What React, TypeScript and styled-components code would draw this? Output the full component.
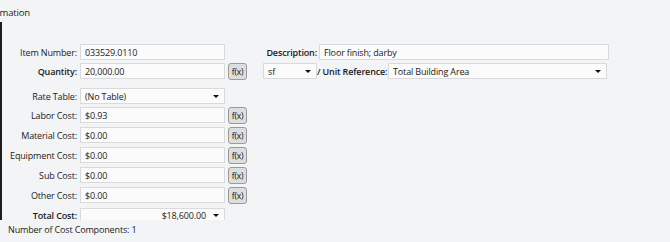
import React from "react";
import styled, { createGlobalStyle } from "styled-components";

const Global = createGlobalStyle`
  html, body { margin: 0; padding: 0; background: #f3f4f6; }
  body { font-family: "Open Sans", "Noto Sans", sans-serif; font-size: 9px; letter-spacing: -0.15px; color: #1b1b1b; }
`;

const Page = styled.div`
  width: 670px;
  height: 242px;
  background: #f3f4f6;
  overflow: hidden;
  display: flex;
  flex-direction: column;
`;

const Heading = styled.div`
  height: 22px;
  width: 30px;
  overflow: hidden;
  display: flex;
  justify-content: flex-end;
  font-size: 9.5px;
  line-height: 26px;
  white-space: nowrap;
  & > span { flex: none; }
`;

const Panel = styled.div`
  height: 198px;
  border-left: 2px solid #1e1e1e;
  overflow: hidden;
  padding-top: 22px;
  box-sizing: border-box;
  display: flex;
  flex-direction: column;
`;

const Row = styled.div<{ $mt?: number }>`
  display: flex;
  align-items: center;
  height: 16px;
  margin-top: ${(p) => p.$mt ?? 0}px;
`;

const Label = styled.div<{ $w: number; $bold?: boolean; $pr?: number }>`
  width: ${(p) => p.$w}px;
  flex: none;
  text-align: right;
  padding-right: ${(p) => p.$pr ?? 3}px;
  box-sizing: border-box;
  font-weight: ${(p) => (p.$bold ? 600 : 400)};
  white-space: nowrap;
`;

const Field = styled.div<{ $w: number }>`
  width: ${(p) => p.$w}px;
  height: 16px;
  flex: none;
  box-sizing: border-box;
  background: #fbfbfb;
  border: 1px solid #d9dadc;
  padding: 0 4px;
  display: flex;
  align-items: center;
  color: #222;
  white-space: nowrap;
`;

const Select = styled(Field)<{ $right?: boolean }>`
  justify-content: space-between;
  padding-right: 5px;
  & > span { flex: 1; text-align: ${(p) => (p.$right ? "right" : "left")}; padding-right: ${(p) => (p.$right ? 7 : 0)}px; }
`;

const Arrow = styled.i`
  width: 0;
  height: 0;
  border-left: 3px solid transparent;
  border-right: 3px solid transparent;
  border-top: 3px solid #111;
  flex: none;
`;

const Fx = styled.button`
  width: 19px;
  height: 17px;
  flex: none;
  margin-left: 3px;
  padding: 0;
  box-sizing: border-box;
  background: #dedede;
  border: 1px solid #9a9a9a;
  border-radius: 3px;
  font-family: "Open Sans", "Noto Sans", sans-serif;
  font-size: 8.5px;
  letter-spacing: -0.2px;
  color: #111;
`;

const Gap = styled.div<{ $w: number }>`
  width: ${(p) => p.$w}px;
  flex: none;
`;

const TotalBox = styled(Select)`
  height: 14px;
  border-bottom: none;
  align-self: flex-start;
`;

const Footer = styled.div`
  padding-left: 8px;
  line-height: 20px;
`;

const costs = [
  { label: "Labor Cost:", value: "$0.93" },
  { label: "Material Cost:", value: "$0.00" },
  { label: "Equipment Cost:", value: "$0.00" },
  { label: "Sub Cost:", value: "$0.00" },
  { label: "Other Cost:", value: "$0.00" },
];

export default function App() {
  return (
    <Page>
      <Global />
      <Heading><span>Item Information</span></Heading>
      <Panel>
        <Row>
          <Label $w={78}>Item Number:</Label>
          <Field $w={145}>033529.0110</Field>
          <Label $w={94} $bold $pr={2}>Description:</Label>
          <Field $w={290}>Floor finish; darby</Field>
        </Row>
        <Row $mt={3}>
          <Label $w={78} $bold>Quantity:</Label>
          <Field $w={145}>20,000.00</Field>
          <Fx>f(x)</Fx>
          <Gap $w={16} />
          <Select $w={54}><span>sf</span><Arrow /></Select>
          <Label $w={71} $bold $pr={1}>/ Unit Reference:</Label>
          <Select $w={219}><span>Total Building Area</span><Arrow /></Select>
        </Row>
        <Row $mt={9}>
          <Label $w={78}>Rate Table:</Label>
          <Select $w={145}><span>(No Table)</span><Arrow /></Select>
        </Row>
        {costs.map((c, i) => (
          <Row key={c.label} $mt={i === 0 ? 3 : 4}>
            <Label $w={78}>{c.label}</Label>
            <Field $w={145}>{c.value}</Field>
            <Fx>f(x)</Fx>
          </Row>
        ))}
        <Row $mt={5}>
          <Label $w={78} $bold>Total Cost:</Label>
          <TotalBox $w={145} $right><span>$18,600.00</span><Arrow /></TotalBox>
        </Row>
      </Panel>
      <Footer>Number of Cost Components: 1</Footer>
    </Page>
  );
}
